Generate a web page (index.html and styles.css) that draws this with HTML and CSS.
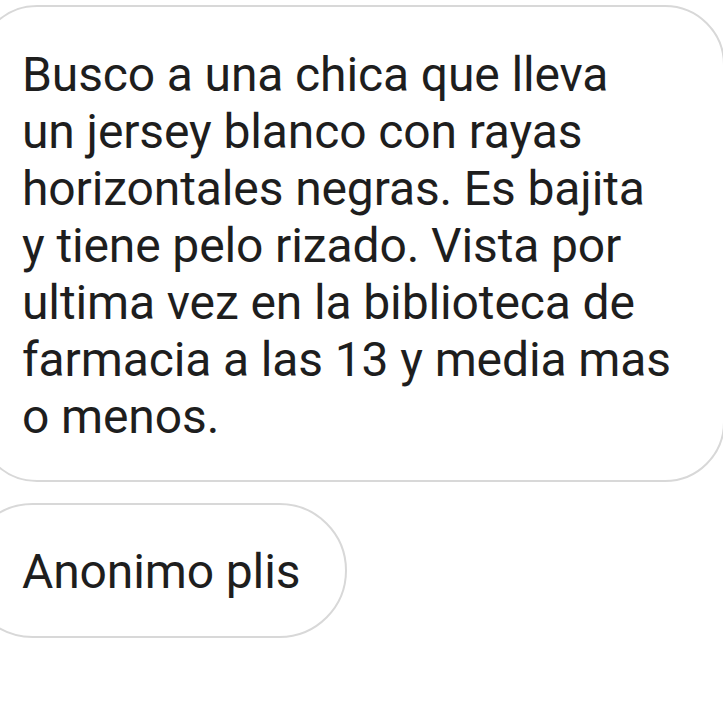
FILE: index.html
```html
<!DOCTYPE html>
<html lang="es">
<head>
<meta charset="utf-8">
<title>Mensajes</title>
<link rel="stylesheet" href="styles.css">
</head>
<body>
<div class="thread">
  <div class="bubble bubble-long">Busco a una chica que lleva<br>un jersey blanco con rayas<br>horizontales negras. Es bajita<br>y tiene pelo rizado. Vista por<br>ultima vez en la biblioteca de<br>farmacia a las 13 y media mas<br>o menos.</div>
  <div class="bubble bubble-short">Anonimo plis</div>
</div>
</body>
</html>
```
FILE: styles.css
```css
html, body {
  margin: 0;
  padding: 0;
  background: #ffffff;
  overflow: hidden;
}
.thread {
  display: flex;
  flex-direction: column;
  align-items: flex-start;
  gap: 21px;
  padding-top: 5px;
  font-family: Roboto, "Noto Sans", sans-serif;
  font-size: 48px;
  line-height: 57px;
  letter-spacing: -0.12px;
  color: #1e1e1e;
}
.bubble {
  box-sizing: border-box;
  border: 2px solid #d8d8d8;
  background: #ffffff;
  white-space: nowrap;
}
.bubble-long {
  margin-left: -23px;
  width: 748px;
  border-radius: 60px;
  padding: 39px 20px 35px 43px;
}
.bubble-short {
  margin-left: -35px;
  border-radius: 68px;
  padding: 38px 45px 36px 55px;
}
```
